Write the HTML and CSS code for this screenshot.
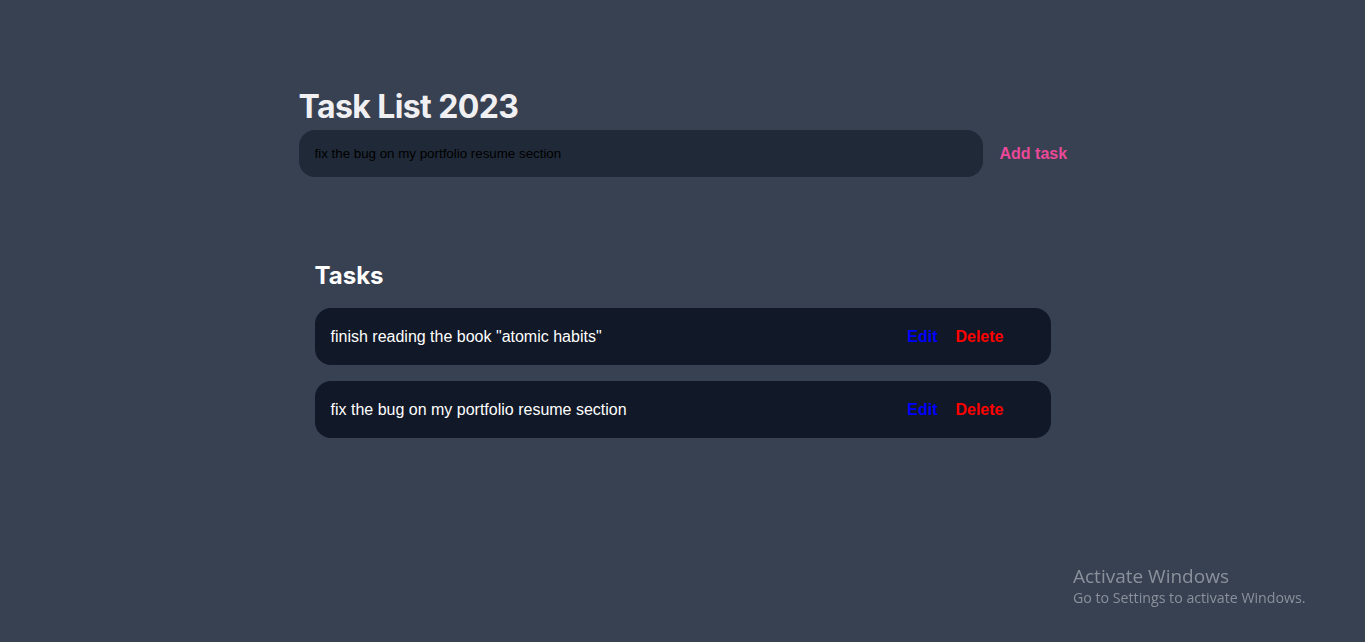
FILE: index.html
```html
<!DOCTYPE html>
<html lang="en">
<head>
<meta charset="utf-8">
<title>Task List 2023</title>
<link rel="stylesheet" href="styles.css">
</head>
<body>
<main class="app">
  <header class="header">
    <h1 class="title">Task List 2023</h1>
    <form class="new-task-form">
      <input class="new-task-input" type="text" value="fix the bug on my portfolio resume section">
      <button class="add-btn" type="button">Add task</button>
    </form>
  </header>
  <section class="task-list">
    <h2 class="tasks-heading">Tasks</h2>
    <div class="tasks">
      <div class="task">
        <span class="task-text">finish reading the book "atomic habits"</span>
        <div class="actions">
          <button class="edit" type="button">Edit</button>
          <button class="delete" type="button">Delete</button>
        </div>
      </div>
      <div class="task">
        <span class="task-text">fix the bug on my portfolio resume section</span>
        <div class="actions">
          <button class="edit" type="button">Edit</button>
          <button class="delete" type="button">Delete</button>
        </div>
      </div>
    </div>
  </section>
</main>
<div class="watermark">
  <div class="wm-title">Activate Windows</div>
  <div class="wm-sub">Go to Settings to activate Windows.</div>
</div>
</body>
</html>
```
FILE: styles.css
```css
* { box-sizing: border-box; }
html, body { height: 100%; }
body {
  margin: 0;
  background: #374151;
  font-family: "Liberation Sans", Arial, sans-serif;
  color: #fff;
  overflow: hidden;
}
.app {
  width: 768px;
  margin: 0 auto;
  padding-top: 87px;
}
.title {
  margin: 0 0 3px;
  font-family: Inter, "Open Sans", sans-serif;
  font-weight: 700;
  font-size: 32px;
  line-height: 40px;
  color: #f0f0f3;
  letter-spacing: -0.6px;
}
.new-task-form {
  display: flex;
  align-items: center;
  gap: 17px;
}
.new-task-input {
  flex: 1;
  height: 47px;
  border: none;
  border-radius: 16px;
  background: #1f2937;
  padding: 0 16px;
  font-family: "Liberation Sans", Arial, sans-serif;
  font-size: 13.333px;
  color: #000;
  outline: none;
}
.add-btn {
  border: none;
  background: none;
  padding: 0;
  width: 67px;
  white-space: nowrap;
  text-align: left;
  font-family: "Liberation Sans", Arial, sans-serif;
  font-weight: 700;
  font-size: 16px;
  color: #ec4899;
  cursor: pointer;
}
.task-list {
  padding: 83px 16px 0;
}
.tasks-heading {
  margin: 0 0 16px;
  font-family: Inter, "Open Sans", sans-serif;
  font-weight: 700;
  font-size: 24px;
  line-height: 32px;
  color: #fff;
}
.tasks {
  display: flex;
  flex-direction: column;
  gap: 16px;
}
.task {
  display: flex;
  align-items: center;
  justify-content: space-between;
  height: 57px;
  padding: 0 47px 0 16px;
  background: #111827;
  border-radius: 16px;
}
.task-text {
  font-size: 16px;
  color: #fff;
}
.actions {
  display: flex;
  gap: 18px;
}
.actions button {
  border: none;
  background: none;
  padding: 0;
  font-family: "Liberation Sans", Arial, sans-serif;
  font-weight: 700;
  font-size: 16px;
  cursor: pointer;
}
.edit { color: #0000ff; }
.delete { color: #ff0000; }
.watermark {
  position: fixed;
  left: 1073px;
  top: 563px;
  font-family: "Open Sans", "Noto Sans", sans-serif;
  color: #8b919c;
}
.wm-title {
  font-size: 19px;
  line-height: 26px;
}
.wm-sub {
  font-size: 14.2px;
  line-height: 18px;
}
```
